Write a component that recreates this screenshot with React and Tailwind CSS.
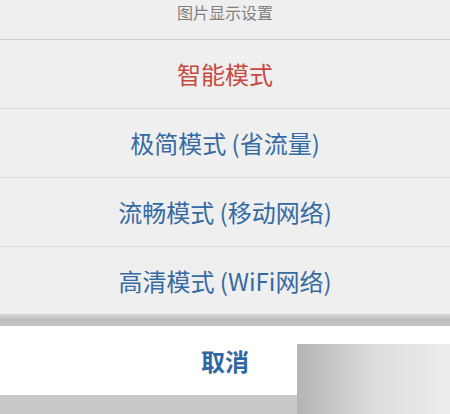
export default function App() {
  const font = { fontFamily: '"Noto Sans CJK SC", "Noto Sans", sans-serif' };
  return (
    <div className="relative w-[450px] h-[414px] overflow-hidden bg-[#c8c8c8]" style={font}>
      <div className="flex flex-col bg-[#efefef]">
        <div className="h-[40px] border-b border-[#cfcfcf] flex justify-center pt-[2px] text-[16px] leading-[20px] text-[#808080]">
          图片显示设置
        </div>
        <div className="h-[69px] border-b border-[#d6d6d6] flex items-center justify-center text-[24px] text-[#c9483f]">
          智能模式
        </div>
        <div className="h-[69px] border-b border-[#d6d6d6] flex items-center justify-center text-[24px] text-[#356aa3]">
          极简模式 (省流量)
        </div>
        <div className="h-[69px] border-b border-[#d6d6d6] flex items-center justify-center text-[24px] text-[#356aa3]">
          流畅模式 (移动网络)
        </div>
        <div className="h-[67px] flex items-center justify-center text-[24px] text-[#356aa3]">
          高清模式 (WiFi网络)
        </div>
      </div>
      <div className="h-[12px] bg-gradient-to-b from-[#d8d8d8] via-[#bdbdbd] to-[#c6c6c6]" />
      <div className="h-[69px] bg-white flex items-center justify-center text-[24px] font-bold text-[#2f66a3]">
        取消
      </div>
      <div className="absolute left-[297px] top-[344px] w-[153px] h-[70px] bg-gradient-to-r from-[#b4b4b4] via-[#dcdcdc] to-[#ededed]" />
    </div>
  );
}
